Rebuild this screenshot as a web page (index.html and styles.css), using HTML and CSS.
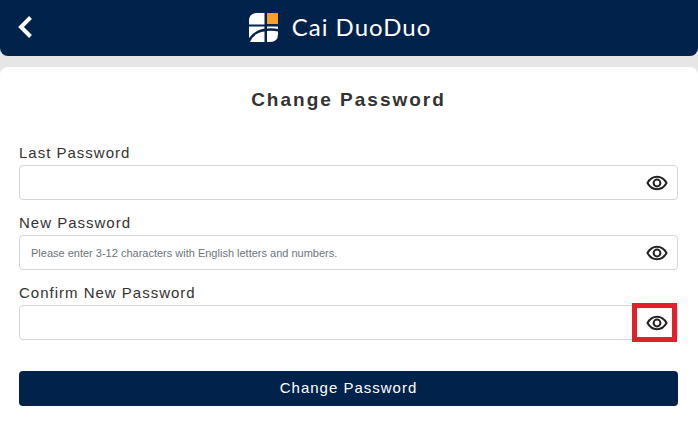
FILE: index.html
```html
<!DOCTYPE html>
<html lang="en">
<head>
    <meta charset="utf-8">
    <meta name="viewport" content="width=device-width, initial-scale=1">
    <title>Change Password</title>
    <link rel="stylesheet" href="styles.css">
</head>
<body>
    <svg class="sprite" aria-hidden="true">
        <symbol id="eye" viewBox="0 0 22 16">
            <path d="M1.5 8C3.6 4.1 7 1.8 11 1.8S18.4 4.1 20.5 8C18.4 11.9 15 14.2 11 14.2S3.6 11.9 1.5 8Z" />
            <circle cx="11" cy="8" r="3.4" />
        </symbol>
    </svg>

    <header class="header">
        <a href="#" class="back" aria-label="Back">
            <svg width="16" height="24" viewBox="0 0 16 24">
                <path d="M12.5 2.5 3 12l9.5 9.5" />
            </svg>
        </a>
        <div class="brand">
            <svg class="logo" width="29" height="29" viewBox="0 0 29 29">
                <path fill="#fff" d="M8 0h7.5v11.5H0V8Q0 0 8 0Z" />
                <path fill="#f9a02b" d="M18 0h11v11H18Z" />
                <path fill="#fff" d="M0 13.5h15.5v2Q6 17 0 25Z" />
                <path fill="#fff" d="M18 13.5h11V16q-5-1-11-.5Z" />
                <path fill="#fff" d="M15.5 18.5V29H1Q4.500 20 15.500 18.500Z" />
                <path fill="#fff" d="M18 18q6-.5 11 .5V21q0 8-8 8h-3Z" />
            </svg>
            <span class="brand-name">Cai DuoDuo</span>
        </div>
    </header>

    <main class="card">
        <h1>Change Password</h1>
        <form>
            <label for="lastPassword">Last Password</label>
            <div class="field">
                <input type="password" id="lastPassword">
                <button type="button" class="eye" aria-label="Show last password"><svg><use href="#eye" /></svg></button>
            </div>

            <label for="newPassword">New Password</label>
            <div class="field">
                <input type="password" id="newPassword" placeholder="Please enter 3-12 characters with English letters and numbers.">
                <button type="button" class="eye" aria-label="Show new password"><svg><use href="#eye" /></svg></button>
            </div>

            <label for="confirmPassword">Confirm New Password</label>
            <div class="field">
                <input type="password" id="confirmPassword">
                <button type="button" class="eye marked" aria-label="Show confirmed password"><svg><use href="#eye" /></svg></button>
            </div>

            <button type="submit" class="submit">Change Password</button>
        </form>
    </main>
</body>
</html>
```

FILE: styles.css
```css
* {
    box-sizing: border-box;
}

body {
    margin: 0;
    min-height: 100vh;
    display: flex;
    flex-direction: column;
    gap: 11px;
    background: #e6e6e6;
    color: #333;
    font-family: "Liberation Sans", Arial, sans-serif;
    letter-spacing: 1px;
}

.sprite {
    display: none;
}

/* top bar */
.header {
    display: grid;
    grid-template-columns: 1fr auto 1fr;
    align-items: center;
    height: 56px;
    padding: 0 36px 2px 18px;
    background: #00224b;
    border-radius: 0 0 8px 8px;
}

.back {
    display: flex;
    justify-self: start;
}

.back path {
    fill: none;
    stroke: #fff;
    stroke-width: 4;
}

.brand {
    display: flex;
    align-items: center;
    gap: 14px;
}

.brand-name {
    color: #fff;
    font-family: Lato, "Open Sans", sans-serif;
    font-size: 24px;
    line-height: 32px;
}

/* form */
.card {
    flex: 1;
    padding: 19px 20px 16px 19px;
    background: #fff;
    border-radius: 8px 8px 0 0;
}

h1 {
    margin: 0 0 27px;
    font-size: 19px;
    line-height: 28px;
    letter-spacing: 2px;
    text-align: center;
}

label {
    display: block;
    font-size: 15px;
    line-height: 24px;
}

.field {
    display: flex;
    height: 35px;
    margin-bottom: 11px;
    border: 1px solid #d5d5d5;
    border-radius: 4px;
}

.field input {
    flex: 1;
    min-width: 0;
    padding: 0 11px;
    border: 0;
    outline: 0;
    background: none;
    font-family: inherit;
    font-size: 11px;
}

.field input::placeholder {
    color: #6c757d;
    opacity: 1;
}

.eye {
    display: flex;
    align-items: center;
    justify-content: center;
    width: 39px;
    margin-right: 3px;
    padding: 0 0 0 4px;
    border: 0;
    background: none;
    cursor: pointer;
}

.eye svg {
    width: 22px;
    height: 16px;
    fill: none;
    stroke: #222;
    stroke-width: 2;
}

.marked {
    outline: 5px solid #e0202b;
    outline-offset: -2px;
}

.submit {
    display: block;
    width: 100%;
    height: 35px;
    margin-top: 31px;
    padding: 0 0 2px;
    border: 0;
    border-radius: 4px;
    background: #00224b;
    color: #fff;
    font-family: inherit;
    font-size: 15px;
    letter-spacing: 1px;
    cursor: pointer;
}
```
